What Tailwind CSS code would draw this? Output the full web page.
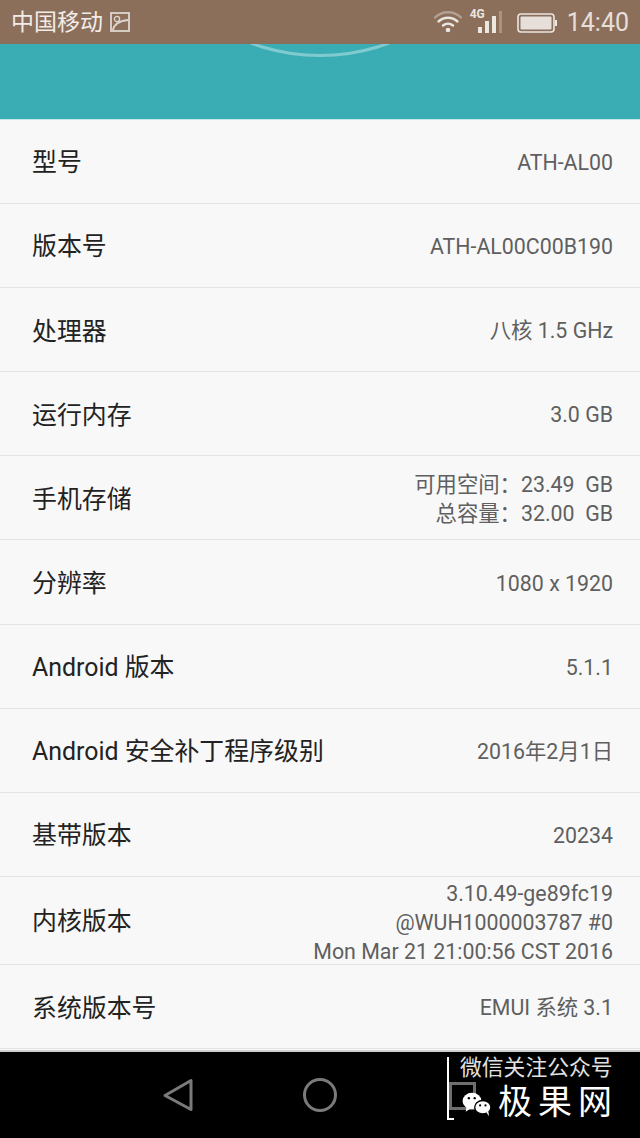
<!DOCTYPE html>
<html lang="zh">
<head>
<meta charset="utf-8">
<script src="https://cdn.jsdelivr.net/npm/@tailwindcss/browser@4"></script>
</head>
<body class="m-0">
<div class="w-[640px] h-[1138px] overflow-hidden flex flex-col bg-[#f8f8f8] font-['Roboto','Noto_Sans_CJK_SC',sans-serif]">
  <div class="h-[44px] shrink-0 bg-[#8b6f5b] flex items-center pl-[11px] pr-[11px] text-[#f1ece8]">
    <span class="text-[23px] leading-none">中国移动</span>
    <svg class="ml-[7px]" width="20" height="20" viewBox="0 0 20 20" fill="none" stroke="#ded6d0" stroke-width="1.8"><rect x="1" y="1" width="18" height="18"/><circle cx="7" cy="7" r="2.6" stroke-width="1.3"/><path d="M3 18c1-6 6-9 15-10"/></svg>
    <div class="ml-auto flex items-center">
      <svg width="30" height="22" viewBox="0 0 30 22" fill="none" stroke-linecap="round"><path d="M2 6.500C9 -.5 21-.5 28 6.500" stroke="#ffffff" stroke-opacity=".35" stroke-width="2.400"/><path d="M5.500 10.500C11 5.500 19 5.500 24.500 10.500" stroke="#ece6e1" stroke-width="2.400"/><path d="M10 14.500C13 12 17 12 20 14.500" stroke="#ece6e1" stroke-width="2.400"/><circle cx="15" cy="19" r="2.300" fill="#ece6e1"/></svg>
      <div class="relative ml-[7px] w-[34px] h-[30px]">
        <span class="absolute left-0 top-[1px] text-[12px] leading-none font-bold text-[#ece6e1]">4G</span>
        <div class="absolute left-[8px] bottom-[4px] flex items-end gap-[3px]">
          <div class="w-[4px] h-[6px] bg-[#ece6e1]"></div><div class="w-[4px] h-[12px] bg-[#ece6e1]"></div><div class="w-[4px] h-[17px] bg-[#ece6e1]"></div><div class="w-[3px] h-[22px] bg-[#a89385]"></div>
        </div>
      </div>
      <svg class="ml-[13px] mt-[2px]" width="41" height="20" viewBox="0 0 41 20"><rect x="1" y="1" width="36" height="18" rx="3" fill="none" stroke="#ece6e1" stroke-width="1.600"/><rect x="3.500" y="3.500" width="31" height="13" rx="1" fill="#e6dfda"/><rect x="38" y="7" width="2" height="6" fill="#ece6e1"/></svg>
      <span class="ml-[9px] text-[25px] leading-none text-[#e6dfda]">14:40</span>
    </div>
  </div>
  <div class="h-[76px] shrink-0 bg-[#3aacb3] relative overflow-hidden border-b border-[#c9e6e8]">
    <div class="absolute left-[170px] top-[-207px] w-[300px] h-[220px] rounded-[50%] border-[3px] border-[#7fcbd0]"></div>
  </div>
  <div class="flex-1 text-[#222222]">
    <div class="h-[84.100px] flex items-center justify-between pt-[3px] pl-[32px] pr-[27px] border-b border-[#e4e4e4]"><span class="text-[24.900px]">型号</span><span class="text-[21.350px] text-[#5f5f5f]">ATH-AL00</span></div>
    <div class="h-[84.100px] flex items-center justify-between pt-[3px] pl-[32px] pr-[27px] border-b border-[#e4e4e4]"><span class="text-[24.900px]">版本号</span><span class="text-[21.350px] text-[#5f5f5f]">ATH-AL00C00B190</span></div>
    <div class="h-[84.100px] flex items-center justify-between pt-[3px] pl-[32px] pr-[27px] border-b border-[#e4e4e4]"><span class="text-[24.900px]">处理器</span><span class="text-[21.350px] text-[#5f5f5f]">八核 1.5 GHz</span></div>
    <div class="h-[84.100px] flex items-center justify-between pt-[3px] pl-[32px] pr-[27px] border-b border-[#e4e4e4]"><span class="text-[24.900px]">运行内存</span><span class="text-[21.350px] text-[#5f5f5f]">3.0 GB</span></div>
    <div class="h-[84.100px] flex items-center justify-between pt-[3px] pl-[32px] pr-[27px] border-b border-[#e4e4e4]"><span class="text-[24.900px]">手机存储</span><span class="text-[21.350px] leading-[29px] text-[#5f5f5f] text-right whitespace-pre">可用空间：23.49  GB<br>总容量：32.00  GB</span></div>
    <div class="h-[84.100px] flex items-center justify-between pt-[3px] pl-[32px] pr-[27px] border-b border-[#e4e4e4]"><span class="text-[24.900px]">分辨率</span><span class="text-[21.350px] text-[#5f5f5f]">1080 x 1920</span></div>
    <div class="h-[84.100px] flex items-center justify-between pt-[3px] pl-[32px] pr-[27px] border-b border-[#e4e4e4]"><span class="text-[24.900px]">Android 版本</span><span class="text-[21.350px] text-[#5f5f5f]">5.1.1</span></div>
    <div class="h-[84.100px] flex items-center justify-between pt-[3px] pl-[32px] pr-[27px] border-b border-[#e4e4e4]"><span class="text-[24.900px]">Android 安全补丁程序级别</span><span class="text-[21.350px] text-[#5f5f5f]">2016年2月1日</span></div>
    <div class="h-[84.100px] flex items-center justify-between pt-[3px] pl-[32px] pr-[27px] border-b border-[#e4e4e4]"><span class="text-[24.900px]">基带版本</span><span class="text-[21.350px] text-[#5f5f5f]">20234</span></div>
    <div class="h-[88.500px] flex items-center justify-between pt-[3px] pl-[32px] pr-[27px] border-b border-[#e4e4e4]"><span class="text-[24.900px]">内核版本</span><span class="text-[21.350px] leading-[29px] text-[#5f5f5f] text-right whitespace-nowrap">3.10.49-ge89fc19<br>@WUH1000003787 #0<br>Mon Mar 21 21:00:56 CST 2016</span></div>
    <div class="h-[84.100px] flex items-center justify-between pt-[3px] pl-[32px] pr-[27px] border-b border-[#e4e4e4]"><span class="text-[24.900px]">系统版本号</span><span class="text-[21.350px] text-[#5f5f5f]">EMUI 系统 3.1</span></div>
  </div>
  <div class="h-[2px] shrink-0 bg-[#cfcfcf]"></div>
  <div class="h-[86px] shrink-0 bg-black relative">
    <svg class="absolute left-[160px] top-[25px]" width="36" height="36" viewBox="0 0 36 36" fill="none" stroke="#7a7a7a" stroke-width="3" stroke-linejoin="round"><path d="M5 18.500 31 3.500V32.500Z"/></svg>
    <svg class="absolute left-[302px] top-[25px]" width="36" height="36" viewBox="0 0 36 36" fill="none" stroke="#7a7a7a" stroke-width="3"><circle cx="18" cy="18" r="15.500"/></svg>
    <div class="absolute left-[449px] top-[30px] w-[27px] h-[28px] border-[3px] border-[#6e6e6e]"></div>
    <div class="absolute left-[447px] top-[5px] w-[7px] h-[63px] border-l-[2px] border-b-[2px] border-white"></div>
    <svg class="absolute left-[461px] top-[39px]" width="31" height="27" viewBox="0 0 34 30" fill="#fff"><ellipse cx="12" cy="11" rx="10.500" ry="9"/><path d="M6 17l-1 6 6-4Z"/><ellipse cx="24" cy="18" rx="9" ry="7.500" stroke="#000" stroke-width="1.500"/><path d="M28 24l3 4-1-6Z"/><circle cx="8.500" cy="8" r="1.300" fill="#000"/><circle cx="15" cy="8" r="1.300" fill="#000"/><circle cx="21" cy="16" r="1.200" fill="#000"/><circle cx="27" cy="16" r="1.200" fill="#000"/></svg>
    <span class="absolute left-[460px] top-[2px] text-[21.800px] leading-[28px] text-[#e2e2e2] whitespace-nowrap">微信关注公众号</span>
    <span class="absolute left-[498px] top-[30px] text-[34px] leading-[40px] tracking-[6px] text-white whitespace-nowrap">极果网</span>
  </div>
</div>
</body>
</html>
